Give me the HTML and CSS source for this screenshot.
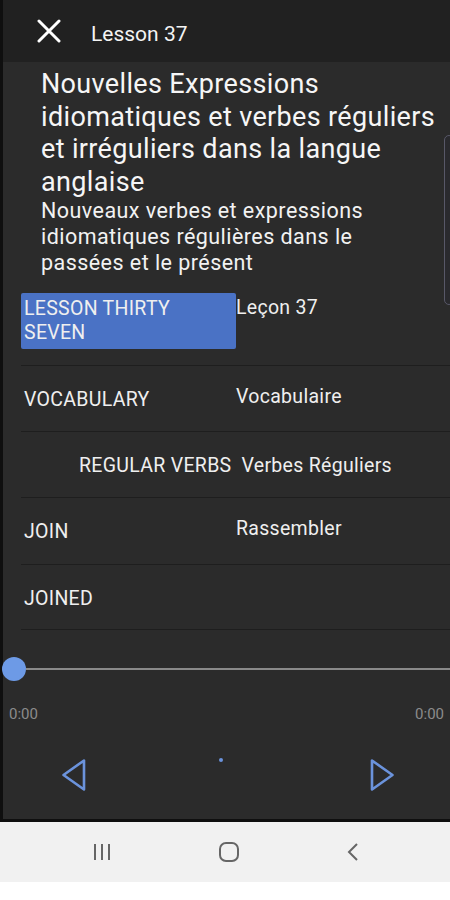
FILE: index.html
```html
<!doctype html>
<html>
<head>
<meta charset="utf-8">
<title>Lesson 37</title>
<link rel="stylesheet" href="styles.css">
</head>
<body>
<div class="screen">
	<div class="topbar">
		<svg class="close" width="24" height="24" viewBox="0 0 24 24"><path d="M2 2L22 22M22 2L2 22" stroke="#fff" stroke-width="3" stroke-linecap="round"/></svg>
		<span class="top-title">Lesson 37</span>
	</div>
	<div class="content">
		<div class="head">
			<h1 class="title">Nouvelles Expressions idiomatiques et verbes réguliers et irréguliers dans la langue anglaise</h1>
			<p class="subtitle">Nouveaux verbes et expressions idiomatiques régulières dans le passées et le présent</p>
		</div>
		<div class="scroll"></div>
		<div class="rows">
			<div class="row first">
				<div class="en active">LESSON THIRTY SEVEN</div>
				<div class="fr">Leçon 37</div>
			</div>
			<div class="row">
				<div class="en">VOCABULARY</div>
				<div class="fr up">Vocabulaire</div>
			</div>
			<div class="row section">
				<span>REGULAR VERBS</span>
				<span>Verbes Réguliers</span>
			</div>
			<div class="row">
				<div class="en">JOIN</div>
				<div class="fr up">Rassembler</div>
			</div>
			<div class="row">
				<div class="en">JOINED</div>
				<div class="fr"></div>
			</div>
		</div>
		<div class="player">
			<div class="slider">
				<span class="thumb"></span>
				<span class="track"></span>
			</div>
			<div class="times">
				<span>0:00</span>
				<span>0:00</span>
			</div>
			<div class="controls">
				<svg width="26" height="34" viewBox="0 0 26 34"><path d="M23 2.5L23 31.5L2.5 17Z" fill="none" stroke="#6b93dc" stroke-width="2.6" stroke-linejoin="round"/></svg>
				<span class="dot"></span>
				<svg width="26" height="34" viewBox="0 0 26 34"><path d="M3 2.5L3 31.5L23.5 17Z" fill="none" stroke="#6b93dc" stroke-width="2.6" stroke-linejoin="round"/></svg>
			</div>
		</div>
	</div>
</div>
<div class="navbar">
	<svg width="20" height="18" viewBox="0 0 20 18"><path d="M3 1V17M10 1V17M17 1V17" stroke="#666" stroke-width="2"/></svg>
	<svg width="22" height="22" viewBox="0 0 22 22"><rect x="2" y="2" width="18" height="18" rx="6" fill="none" stroke="#666" stroke-width="2"/></svg>
	<svg width="14" height="20" viewBox="0 0 14 20"><path d="M11 2L3 10L11 18" fill="none" stroke="#666" stroke-width="2"/></svg>
</div>
<div class="bottom"></div>
</body>
</html>
```
FILE: styles.css
```css
* { box-sizing: border-box; }
body { margin: 0; background: #fff; font-family: Roboto, "Liberation Sans", sans-serif; color: #f1f1f1; }

.screen { width: 450px; height: 822px; border-left: 3px solid #0f0f0f; border-bottom: 3px solid #0f0f0f; background: #2b2b2b; display: flex; flex-direction: column; position: relative; }

.topbar { height: 62px; flex: none; background: #212121; display: flex; align-items: flex-start; padding: 19px 0 0 34px; }
.topbar .close { margin-right: 30px; }
.top-title { font-size: 21px; line-height: 24px; margin-top: 3px; color: #f4f4f4; }

.content { flex: 1; display: flex; flex-direction: column; }
.head { padding: 6px 0 0 38px; }
.title { margin: 0; font-size: 27px; letter-spacing: 0.35px; line-height: 32.5px; font-weight: 400; color: #f6f6f6; width: 400px; }
.subtitle { margin: 0; font-size: 21.5px; letter-spacing: 0.45px; line-height: 26px; width: 385px; color: #f2f2f2; }

.scroll { position: absolute; right: -4px; top: 135px; width: 10px; height: 170px; border: 1.5px solid #585868; border-radius: 6px; background: #2a2a2e; }

.rows { margin: 17px 0 0 18px; }
.row { display: grid; grid-template-columns: 215px 1fr; border-bottom: 1px solid #1e1e1e; height: 66px; padding-top: 22px; font-size: 19.5px; letter-spacing: 0.3px; line-height: 24px; color: #efefef; }
.row.first { height: 73px; padding-top: 0; }
.en { padding-left: 3px; }
.en.active { background: #4a72c5; border-radius: 2px; padding: 4px 3px; height: 56px; }
.fr { padding-top: 3px; }
.row .fr.up { padding-top: 0; margin-top: -3px; }
.row.section { display: flex; justify-content: center; gap: 10px; padding-top: 22px; }
.row:nth-child(4) { height: 67px; }
.row:nth-child(5) { height: 65px; }

.player { padding-top: 27px; }
.slider { display: flex; align-items: center; height: 24px; }
.thumb { width: 24px; height: 24px; border-radius: 50%; background: #6d9ae6; flex: none; margin-left: -1px; }
.track { flex: 1; height: 2.5px; background: #8a8a8a; }
.times { display: flex; justify-content: space-between; padding: 0 6px 0 6px; margin-top: 25px; font-size: 15px; line-height: 16px; color: #8c8c8c; }
.controls { display: flex; justify-content: space-between; padding: 0 55px 0 58px; margin-top: 36px; }
.dot { width: 4px; height: 4px; border-radius: 50%; background: #6b93dc; margin: 0 14px 0 0; }

.navbar { width: 450px; height: 60px; background: #f1f1f1; display: flex; align-items: center; justify-content: space-between; padding: 0 90px 0 92px; }
.bottom { height: 18px; background: #fff; }
```
